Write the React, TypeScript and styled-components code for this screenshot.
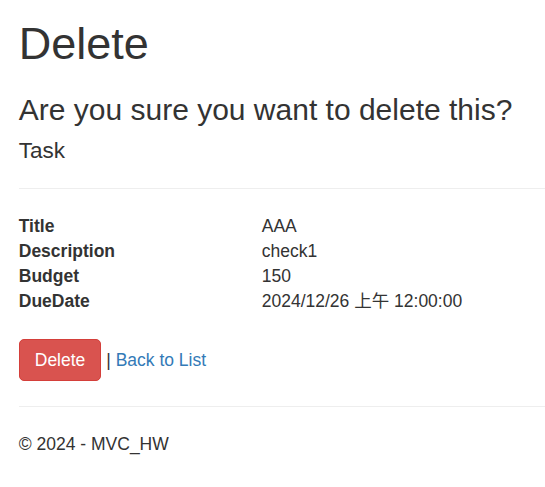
import React from "react";
import styled, { createGlobalStyle } from "styled-components";

const GlobalStyle = createGlobalStyle`
  html, body {
    margin: 0;
    padding: 0;
    background: #ffffff;
  }
  body {
    font-family: "Liberation Sans", Arial, "Noto Sans CJK TC", sans-serif;
    font-size: 17.5px;
    line-height: 25px;
    color: #333333;
  }
  * { box-sizing: border-box; }
`;

const Page = styled.div`
  padding: 18.5px 0 1px 18.75px;
`;

const Title = styled.h1`
  font-size: 45px;
  line-height: 49.5px;
  font-weight: 500;
  margin: 0 0 12.5px;
`;

const Question = styled.h3`
  font-size: 30px;
  line-height: 33px;
  font-weight: 500;
  margin: 25px 0 12.5px;
`;

const EntityName = styled.h4`
  font-size: 22.5px;
  line-height: 24.75px;
  font-weight: 500;
  margin: 12.5px 0 12.5px;
`;

const Rule = styled.hr`
  margin: 25px 0;
  border: 0;
  border-top: 1.25px solid #eeeeee;
  height: 0;
`;

const DetailList = styled.dl`
  display: grid;
  grid-template-columns: 243px 1fr;
  margin: 0 0 25px;
`;

const Term = styled.dt`
  font-weight: 700;
  margin: 0;
`;

const Value = styled.dd`
  margin: 0;
`;

const Actions = styled.div`
  display: flex;
  align-items: center;
  white-space: pre;
`;

const DangerButton = styled.button`
  display: inline-block;
  font-family: inherit;
  font-size: 17.5px;
  line-height: 25px;
  padding: 7.5px 15px;
  color: #ffffff;
  background: #d9534f;
  border: 1.25px solid #d43f3a;
  border-radius: 5px;
  cursor: pointer;
`;

const Link = styled.a`
  color: #337ab7;
  text-decoration: none;
`;

const Footer = styled.footer`
  p {
    margin: 0 0 12.5px;
  }
`;

const rows: [string, string][] = [
  ["Title", "AAA"],
  ["Description", "check1"],
  ["Budget", "150"],
  ["DueDate", "2024/12/26 上午 12:00:00"],
];

export default function App() {
  return (
    <>
      <GlobalStyle />
      <Page>
        <Title>Delete</Title>
        <Question>Are you sure you want to delete this?</Question>
        <div>
          <EntityName>Task</EntityName>
          <Rule />
          <DetailList>
            {rows.map(([k, v]) => (
              <React.Fragment key={k}>
                <Term>{k}</Term>
                <Value>{v}</Value>
              </React.Fragment>
            ))}
          </DetailList>
          <form onSubmit={(e) => e.preventDefault()}>
            <Actions>
              <DangerButton type="submit">Delete</DangerButton>
              {" | "}
              <Link href="#">Back to List</Link>
            </Actions>
          </form>
        </div>
        <Rule />
        <Footer>
          <p>© 2024 - MVC_HW</p>
        </Footer>
      </Page>
    </>
  );
}
